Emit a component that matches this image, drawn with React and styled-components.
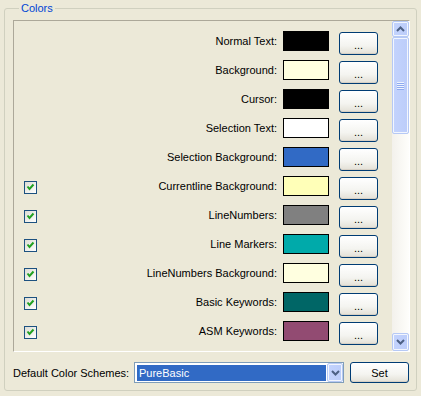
import React from "react";
import styled, { createGlobalStyle } from "styled-components";

const GlobalStyle = createGlobalStyle`
  html, body {
    margin: 0;
    padding: 0;
    background: #ece9d8;
  }
  body {
    font-family: "Liberation Sans", Arial, sans-serif;
    font-size: 11px;
    color: #000;
  }
`;

const colors = [
  { label: "Normal Text:", color: "#000000" },
  { label: "Background:", color: "#ffffe0" },
  { label: "Cursor:", color: "#000000" },
  { label: "Selection Text:", color: "#ffffff" },
  { label: "Selection Background:", color: "#316ac5" },
  { label: "Currentline Background:", color: "#ffffb8", check: true },
  { label: "LineNumbers:", color: "#808080", check: true },
  { label: "Line Markers:", color: "#00aaaa", check: true },
  { label: "LineNumbers Background:", color: "#ffffe0", check: true },
  { label: "Basic Keywords:", color: "#006666", check: true },
  { label: "ASM Keywords:", color: "#924b72", check: true },
];

const Group = styled.fieldset`
  margin: 2px 4px 0 4px;
  padding: 5px 6px 7px 8px;
  min-width: 0;
  border: 1px solid #d0d0bf;
  border-radius: 3px;
`;

const Legend = styled.legend`
  margin-left: 6px;
  padding: 0 2px;
  line-height: 13px;
  color: #0046d5;
`;

const ScrollBox = styled.div`
  display: flex;
  width: 397px;
  height: 332px;
  box-sizing: border-box;
  border: 1px solid;
  border-color: #aca899 #fff #fff #aca899;
`;

const List = styled.div`
  flex: 1;
  overflow: hidden;
  padding-top: 10px;
`;

const Row = styled.div`
  display: flex;
  align-items: flex-start;
  height: 29px;
  padding: 0 14px 0 10px;
`;

const CheckSlot = styled.div`
  width: 13px;
  height: 13px;
  margin-top: 5px;
  flex: none;
`;

const CheckBox = styled.div`
  width: 13px;
  height: 13px;
  box-sizing: border-box;
  border: 1px solid #1c5180;
  background: linear-gradient(135deg, #dcdcd4, #ffffff);
  display: flex;

  svg {
    display: block;
  }
`;

const Label = styled.div`
  flex: 1;
  text-align: right;
  line-height: 20px;
  padding-right: 6px;
  white-space: nowrap;
`;

const Swatch = styled.div`
  width: 46px;
  height: 20px;
  box-sizing: border-box;
  border: 1px solid #000;
  background: ${(p) => p.$color};
  flex: none;
`;

const XpButton = styled.button`
  box-sizing: border-box;
  width: ${(p) => p.$w || 39}px;
  height: ${(p) => p.$h || 23}px;
  margin: ${(p) => p.$m || "1px 0 0 10px"};
  padding: 0;
  flex: none;
  border: 1px solid #003c74;
  border-radius: 3px;
  background: linear-gradient(#ffffff, #f4f4f0 60%, #e3e0d6);
  box-shadow: inset 0 -1px 0 #d6d0c5;
  font-family: "Liberation Sans", Arial, sans-serif;
  font-size: 11px;
  color: #000;
  line-height: 1;
  padding-top: ${(p) => p.$pt || 3}px;
`;

const ScrollBar = styled.div`
  width: 17px;
  display: flex;
  flex-direction: column;
  background: linear-gradient(90deg, #f3f1ec, #fefefb);
  flex: none;
`;

const BlueBlock = styled.div`
  box-sizing: border-box;
  border: 1px solid #b6c9f5;
  border-radius: 2px;
  box-shadow: inset 0 0 0 1px #f2f6fe;
  background: linear-gradient(90deg, #c3d3fd, #bccdfa);
  display: flex;
  align-items: center;
  justify-content: center;
  flex: none;
`;

const ArrowBtn = styled(BlueBlock)`
  height: ${(p) => p.$h}px;
`;

const Thumb = styled(BlueBlock)`
  height: 97px;
`;

const Grip = styled.div`
  width: 7px;
  height: 8px;
  background: repeating-linear-gradient(#eef4fe 0 1px, #8eaaf0 1px 2px);
`;

const Track = styled.div`
  flex: 1;
`;

const Bottom = styled.div`
  display: flex;
  align-items: center;
  margin-top: 10px;
`;

const BottomLabel = styled.div`
  width: 121px;
  flex: none;
  white-space: nowrap;
`;

const Combo = styled.div`
  width: 210px;
  height: 21px;
  box-sizing: border-box;
  border: 1px solid #7f9db9;
  background: #fff;
  display: flex;
  padding: 1px 0 0 1px;
`;

const Selected = styled.div`
  flex: 1;
  margin: 1px 1px 1px 1px;
  background: #316ac5;
  color: #fff;
  line-height: 16px;
  padding-left: 2px;
`;

const DropBtn = styled(BlueBlock)`
  width: 16px;
  height: 19px;
  margin-top: -1px;
`;

const Chevron = ({ up }) => (
  <svg width="9" height="6" viewBox="0 0 9 6">
    <path
      d={up ? "M1 5 L4.5 1.5 L8 5" : "M1 1 L4.5 4.5 L8 1"}
      fill="none"
      stroke="#4d6185"
      strokeWidth="2"
    />
  </svg>
);

const Check = () => (
  <svg width="11" height="11" viewBox="0 0 11 11">
    <polyline
      points="2.5,4.5 4.5,7 8.5,2.5"
      fill="none"
      stroke="#21a121"
      strokeWidth="2"
    />
  </svg>
);

export default function App() {
  return (
    <>
      <GlobalStyle />
      <Group>
        <Legend>Colors</Legend>
        <ScrollBox>
          <List>
            {colors.map((c) => (
              <Row key={c.label}>
                <CheckSlot>
                  {c.check && (
                    <CheckBox>
                      <Check />
                    </CheckBox>
                  )}
                </CheckSlot>
                <Label>{c.label}</Label>
                <Swatch $color={c.color} />
                <XpButton>...</XpButton>
              </Row>
            ))}
          </List>
          <ScrollBar>
            <ArrowBtn $h={16}>
              <Chevron up />
            </ArrowBtn>
            <Thumb>
              <Grip />
            </Thumb>
            <Track />
            <ArrowBtn $h={18}>
              <Chevron />
            </ArrowBtn>
          </ScrollBar>
        </ScrollBox>
        <Bottom>
          <BottomLabel>Default Color Schemes:</BottomLabel>
          <Combo>
            <Selected>PureBasic</Selected>
            <DropBtn>
              <Chevron />
            </DropBtn>
          </Combo>
          <XpButton $w={59} $h={21} $m="0 0 0 6px" $pt={1}>
            Set
          </XpButton>
        </Bottom>
      </Group>
    </>
  );
}
